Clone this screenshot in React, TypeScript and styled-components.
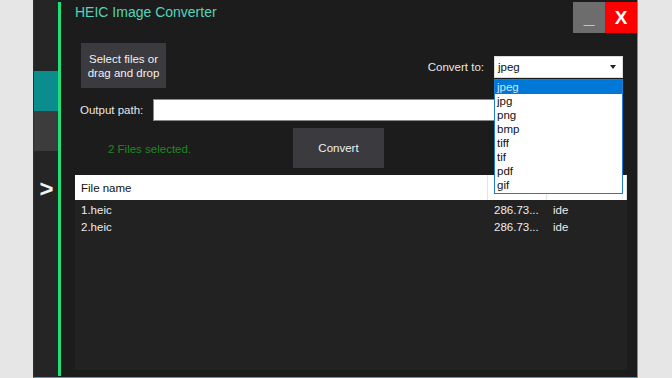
import React from "react";
import styled, { createGlobalStyle } from "styled-components";

const Global = createGlobalStyle`
  html, body { margin: 0; padding: 0; background: #e6e6e6; }
  body { font-family: "Liberation Sans", Arial, sans-serif; }
  * { box-sizing: border-box; }
`;

const Page = styled.div`
  width: 672px;
  height: 378px;
  display: flex;
  padding-left: 33px;
  background: #e6e6e6;
  overflow: hidden;
`;

const Window = styled.div`
  position: relative;
  width: 605px;
  height: 378px;
  display: flex;
  background: #1c1c1c;
  border-left: 1px solid #3a2c2c;
  border-right: 1px solid #5b8fd8;
  border-bottom: 1px solid #5b8fd8;
`;

const Sidebar = styled.div`
  width: 24px;
  display: flex;
  flex-direction: column;
  align-items: stretch;
  background: #252526;
  padding-top: 71px;
`;

const SideTab = styled.div<{ $color: string }>`
  height: 40px;
  background: ${(p) => p.$color};
`;

const Chevron = styled.div`
  margin-top: 26px;
  color: #f2f2f2;
  font-size: 24px;
  font-weight: bold;
  text-align: center;
  line-height: 24px;
  padding-left: 1px;
`;

const Accent = styled.div`
  width: 3px;
  margin: 2px 0 1px;
  background: #1ee07a;
`;

const Main = styled.div`
  flex: 1;
  display: flex;
  flex-direction: column;
  min-width: 0;
`;

const TitleBar = styled.div`
  height: 43px;
  display: flex;
  align-items: flex-start;
  justify-content: space-between;
`;

const Title = styled.div`
  color: #55d4b8;
  font-size: 14px;
  padding: 4px 0 0 14px;
`;

const WinButtons = styled.div`
  display: flex;
  margin-top: 2px;
`;

const WinButton = styled.div<{ $bg: string }>`
  width: 32px;
  height: 31px;
  background: ${(p) => p.$bg};
  color: #fff;
  display: flex;
  align-items: center;
  justify-content: center;
  font-size: 19px;
  font-weight: bold;
`;

const Body = styled.div`
  flex: 1;
  display: flex;
  flex-direction: column;
  padding-left: 14px;
  padding-right: 10px;
`;

const Row = styled.div<{ $h: number }>`
  height: ${(p) => p.$h}px;
  display: flex;
  align-items: flex-start;
`;

const ButtonSlot = styled.div`
  margin-left: 6px;
  height: 100%;
  display: flex;
`;

const DarkButton = styled.div<{ $w: number }>`
  width: ${(p) => p.$w}px;
  height: 100%;
  background: #3b3b3f;
  color: #f0f0f0;
  font-size: 11.5px;
  line-height: 14px;
  display: flex;
  align-items: center;
  justify-content: center;
  text-align: center;
`;

const Label = styled.div`
  color: #e8e8e8;
  font-size: 11.5px;
`;

const ConvertGroup = styled.div`
  margin-left: auto;
  margin-top: 13px;
  margin-right: 4px;
  display: flex;
  align-items: center;
  gap: 10px;
  position: relative;
`;

const Combo = styled.div`
  width: 129px;
  height: 22px;
  background: #fff;
  border: 1px solid #dcdcdc;
  display: flex;
  align-items: center;
  justify-content: space-between;
  padding: 0 6px 0 3px;
  font-size: 11.5px;
  color: #111;
`;

const Caret = styled.div`
  width: 0;
  height: 0;
  border-left: 3px solid transparent;
  border-right: 3px solid transparent;
  border-top: 4px solid #222;
`;

const DropList = styled.div`
  position: absolute;
  top: 23px;
  right: 0;
  width: 129px;
  background: #fff;
  border: 1px solid #1e7bd6;
  z-index: 5;
  padding-bottom: 1px;
`;

const DropItem = styled.div<{ $sel?: boolean }>`
  height: 14px;
  line-height: 14px;
  font-size: 11.5px;
  padding-left: 2px;
  background: ${(p) => (p.$sel ? "#0078d7" : "#fff")};
  color: ${(p) => (p.$sel ? "#cfe6ff" : "#111")};
`;

const PathRow = styled.div`
  height: 22px;
  margin-top: 11px;
  display: flex;
  align-items: center;
  padding-left: 5px;
`;

const PathInput = styled.div`
  width: 406px;
  height: 22px;
  margin-left: 10px;
  background: #fff;
  border: 1px solid #888;
`;

const ActionRow = styled.div`
  height: 40px;
  margin-top: 7px;
  display: flex;
  align-items: center;
`;

const Status = styled.div`
  color: #1c8a22;
  font-size: 11.5px;
  margin-left: 33px;
  margin-top: 2px;
  width: 185px;
`;

const List = styled.div`
  margin-top: 7px;
  flex: 1;
  margin-bottom: 7px;
  background: #222222;
  display: flex;
  flex-direction: column;
`;

const ListHeader = styled.div`
  height: 25px;
  background: #fff;
  display: grid;
  grid-template-columns: 413px 59px 1fr;
  align-items: center;
  font-size: 11.5px;
  color: #111;
`;

const HeadCell = styled.div`
  height: 100%;
  display: flex;
  align-items: center;
  padding-left: 6px;
  border-right: 1px solid #e4e4e4;
`;

const ListRow = styled.div<{ $first?: boolean }>`
  height: 17px;
  margin-top: ${(p) => (p.$first ? 1 : 0)}px;
  display: grid;
  grid-template-columns: 413px 59px 1fr;
  align-items: center;
  font-size: 11.5px;
  color: #ececec;
`;

const Cell = styled.div`
  padding-left: 6px;
  white-space: nowrap;
`;

const formats = ["jpeg", "jpg", "png", "bmp", "tiff", "tif", "pdf", "gif"];

export default function App() {
  return (
    <>
      <Global />
      <Page>
        <Window>
          <Sidebar>
            <SideTab $color="#0b8d8d" />
            <SideTab $color="#3c3c3c" />
            <Chevron>&gt;</Chevron>
          </Sidebar>
          <Accent />
          <Main>
            <TitleBar>
              <Title>HEIC Image Converter</Title>
              <WinButtons>
                <WinButton $bg="#6d6d6d">_</WinButton>
                <WinButton $bg="#ff0000">X</WinButton>
              </WinButtons>
            </TitleBar>
            <Body>
              <Row $h={45}>
                <ButtonSlot>
                  <DarkButton $w={85}>
                    Select files or
                    <br />
                    drag and drop
                  </DarkButton>
                </ButtonSlot>
                <ConvertGroup>
                  <Label>Convert to:</Label>
                  <Combo>
                    <span>jpeg</span>
                    <Caret />
                  </Combo>
                  <DropList>
                    {formats.map((f, i) => (
                      <DropItem key={f} $sel={i === 0}>
                        {f}
                      </DropItem>
                    ))}
                  </DropList>
                </ConvertGroup>
              </Row>
              <PathRow>
                <Label>Output path:</Label>
                <PathInput />
              </PathRow>
              <ActionRow>
                <Status>2 Files selected.</Status>
                <DarkButton $w={91}>Convert</DarkButton>
              </ActionRow>
              <List>
                <ListHeader>
                  <HeadCell>File name</HeadCell>
                  <HeadCell />
                  <HeadCell />
                </ListHeader>
                <ListRow $first>
                  <Cell>1.heic</Cell>
                  <Cell>286.73...</Cell>
                  <Cell>ide</Cell>
                </ListRow>
                <ListRow>
                  <Cell>2.heic</Cell>
                  <Cell>286.73...</Cell>
                  <Cell>ide</Cell>
                </ListRow>
              </List>
            </Body>
          </Main>
        </Window>
      </Page>
    </>
  );
}
